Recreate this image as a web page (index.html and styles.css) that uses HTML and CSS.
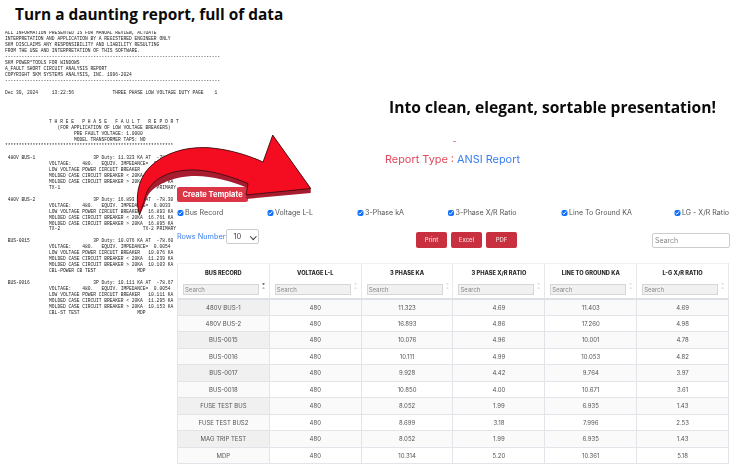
FILE: index.html
```html
<!DOCTYPE html>
<html lang="en">
<head>
<meta charset="utf-8">
<title>Report presentation</title>
<link rel="stylesheet" href="styles.css">
</head>
<body>
<main class="page">
  <h1 class="title">Turn a daunting report, full of data</h1>
  <div class="report">
  <pre class="report-head">ALL INFORMATION PRESENTED IS FOR MANUAL REVIEW, ACTUATE
INTERPRETATION AND APPLICATION BY A REGISTERED ENGINEER ONLY
SKM DISCLAIMS ANY RESPONSIBILITY AND LIABILITY RESULTING
FROM THE USE AND INTERPRETATION OF THIS SOFTWARE.
------------------------------------------------------------------------------
SKM POWER*TOOLS FOR WINDOWS
A_FAULT SHORT CIRCUIT ANALYSIS REPORT
COPYRIGHT SKM SYSTEMS ANALYSIS, INC. 1996-2024
------------------------------------------------------------------------------

Dec 30, 2024     13:22:56              THREE PHASE LOW VOLTAGE DUTY PAGE    1




                T H R E E   P H A S E   F A U L T   R E P O R T
                   (FOR APPLICATION OF LOW VOLTAGE BREAKERS)
                         PRE FAULT VOLTAGE: 1.0000
                         MODEL TRANSFORMER TAPS: NO</pre>
  <pre class="report-body">*************************************************************

 480V BUS-1                     3P Duty: 11.323 KA AT  -78.31
                VOLTAGE:    480.   EQUIV. IMPEDANCE=  0.0051
                LOW VOLTAGE POWER CIRCUIT BREAKER   11.323 KA
                MOLDED CASE CIRCUIT BREAKER &lt; 20KA  11.239 KA
                MOLDED CASE CIRCUIT BREAKER &gt; 20KA  11.323 KA
                TX-1                              TX-1 PRIMARY

 480V BUS-2                     3P Duty: 16.893 KA AT  -78.30
                VOLTAGE:    480.   EQUIV. IMPEDANCE=  0.0033
                LOW VOLTAGE POWER CIRCUIT BREAKER   16.893 KA
                MOLDED CASE CIRCUIT BREAKER &lt; 20KA  16.761 KA
                MOLDED CASE CIRCUIT BREAKER &gt; 20KA  16.895 KA
                TX-2                              TX-2 PRIMARY

 BUS-0015                       3P Duty: 10.076 KA AT  -78.60
                VOLTAGE:    480.   EQUIV. IMPEDANCE=  0.0054
                LOW VOLTAGE POWER CIRCUIT BREAKER   10.076 KA
                MOLDED CASE CIRCUIT BREAKER &lt; 20KA  11.239 KA
                MOLDED CASE CIRCUIT BREAKER &gt; 20KA  10.103 KA
                CBL-POWER CB TEST               MDP

 BUS-0016                       3P Duty: 10.111 KA AT  -78.67
                VOLTAGE:    480.   EQUIV. IMPEDANCE=  0.0054
                LOW VOLTAGE POWER CIRCUIT BREAKER   10.111 KA
                MOLDED CASE CIRCUIT BREAKER &lt; 20KA  11.295 KA
                MOLDED CASE CIRCUIT BREAKER &gt; 20KA  10.153 KA
                CBL-ST TEST                     MDP</pre>
  </div>

  <section class="panel">
    <h2 class="tagline">Into clean, elegant, sortable presentation!</h2>
    <div class="mark"></div>
    <p class="report-type">Report Type : <span class="report-name">ANSI Report</span></p>
    <button class="create" type="button">Create Template</button>
    <div class="checks">
      <label class="check"><input type="checkbox" checked>Bus Record</label>
      <label class="check"><input type="checkbox" checked>Voltage L-L</label>
      <label class="check"><input type="checkbox" checked>3-Phase kA</label>
      <label class="check"><input type="checkbox" checked>3-Phase X/R Ratio</label>
      <label class="check"><input type="checkbox" checked>Line To Ground KA</label>
      <label class="check"><input type="checkbox" checked>LG - X/R Ratio</label>
    </div>
    <div class="tools">
      <div class="rows"><span class="rows-label">Rows Number</span><span class="select-wrap"><select class="rows-select"><option>10</option></select></span></div>
      <div class="exports">
        <button class="export" type="button">Print</button>
        <button class="export" type="button">Excel</button>
        <button class="export" type="button">PDF</button>
      </div>
      <input class="global-search" type="text" placeholder="Search">
    </div>
    <table class="data">
      <thead>
        <tr>
          <th><div class="th-name">BUS RECORD</div><div class="th-search"><input type="text" placeholder="Search"><span class="sort sort-on"></span></div></th>
          <th><div class="th-name">VOLTAGE L-L</div><div class="th-search"><input type="text" placeholder="Search"><span class="sort"></span></div></th>
          <th><div class="th-name">3 PHASE KA</div><div class="th-search"><input type="text" placeholder="Search"><span class="sort"></span></div></th>
          <th><div class="th-name">3 PHASE X/R RATIO</div><div class="th-search"><input type="text" placeholder="Search"><span class="sort"></span></div></th>
          <th><div class="th-name">LINE TO GROUND KA</div><div class="th-search"><input type="text" placeholder="Search"><span class="sort"></span></div></th>
          <th><div class="th-name">L-G X/R RATIO</div><div class="th-search"><input type="text" placeholder="Search"><span class="sort"></span></div></th>
        </tr>
      </thead>
      <tbody>
        <tr><td>480V BUS-1</td><td>480</td><td>11.323</td><td>4.69</td><td>11.403</td><td>4.69</td></tr>
        <tr><td>480V BUS-2</td><td>480</td><td>16.893</td><td>4.86</td><td>17.260</td><td>4.98</td></tr>
        <tr><td>BUS-0015</td><td>480</td><td>10.076</td><td>4.96</td><td>10.001</td><td>4.78</td></tr>
        <tr><td>BUS-0016</td><td>480</td><td>10.111</td><td>4.99</td><td>10.053</td><td>4.82</td></tr>
        <tr><td>BUS-0017</td><td>480</td><td>9.928</td><td>4.42</td><td>9.764</td><td>3.97</td></tr>
        <tr><td>BUS-0018</td><td>480</td><td>10.850</td><td>4.00</td><td>10.671</td><td>3.61</td></tr>
        <tr><td>FUSE TEST BUS</td><td>480</td><td>8.052</td><td>1.99</td><td>6.935</td><td>1.43</td></tr>
        <tr><td>FUSE TEST BUS2</td><td>480</td><td>8.699</td><td>3.18</td><td>7.996</td><td>2.53</td></tr>
        <tr><td>MAG TRIP TEST</td><td>480</td><td>8.052</td><td>1.99</td><td>6.935</td><td>1.43</td></tr>
        <tr><td>MDP</td><td>480</td><td>10.314</td><td>5.20</td><td>10.361</td><td>5.18</td></tr>
      </tbody>
    </table>
  </section>

  <svg class="arrow" viewBox="0 0 733 473" aria-hidden="true">
    <path class="arrow-shade" d="M139.5 215 C134 196 139 176 152 165 C168 151 190 146 212 148 C232 150 250 156 263 162 L272.7 135 L310.7 188 L310.7 193 L246 199 L247.5 188 C232 181 212 176 196 176 C172 176 150 186 146 200 C144 206 142 210 139.5 215 Z"/>
    <path class="arrow-body" d="M139.5 215 C134 196 139 176 152 165 C168 151 190 146 212 148 C232 150 250 156 263 162 L272.7 135 L310.7 188.5 L246 195 L248 183.5 C232 177 214 171 196 170 C172 169 152 178 146 194 C144 201 142 208 139.5 215 Z"/>
  </svg>
</main>
</body>
</html>
```
FILE: styles.css
```css
* { box-sizing: border-box; }

html, body {
  margin: 0;
  padding: 0;
  background: #fff;
}

.page {
  position: relative;
  width: 733px;
  height: 473px;
  overflow: hidden;
  display: grid;
  grid-template-columns: 177px 553px;
  grid-template-rows: 30px 443px;
  font-family: Inter, "Open Sans", sans-serif;
}

.title {
  grid-column: 1 / 3;
  margin: 0;
  padding: 5px 0 0 15px;
  font: 700 15.4px/20px "Open Sans", sans-serif;
  color: #0b0b0b;
  white-space: nowrap;
}

.report {
  padding-left: 5px;
  font: 4.6px/5.95px "Liberation Mono", monospace;
  color: #222;
  filter: blur(0.35px);
  clip-path: inset(1px -200px 0 0);
}

.report-head,
.report-body {
  margin: 0;
  font: inherit;
  white-space: pre;
}

.panel {
  display: flex;
  flex-direction: column;
  align-items: flex-start;
  filter: blur(0.3px);
}

.tagline {
  margin: 67px 0 0 212px;
  font: 700 15.6px/20px "Open Sans", sans-serif;
  color: #0b0b0b;
  white-space: nowrap;
}

.mark {
  width: 3px;
  height: 1px;
  margin: 24px 0 0 276px;
  background: #e88;
}

.report-type {
  margin: 10px 0 0 208px;
  font-size: 10.9px;
  line-height: 14px;
  color: #e2475a;
}

.report-name { color: #3a7ff0; }

.create {
  width: 71px;
  height: 15px;
  margin-top: 21px;
  padding: 0;
  border: 0;
  border-radius: 2px;
  background: #dc3545;
  color: #fff;
  font: 700 7.5px/15px Inter, sans-serif;
}

.checks {
  display: grid;
  grid-template-columns: 90px 90px 90.5px 113.5px 113px 56px;
  width: 553px;
  margin-top: 6px;
  height: 10px;
}

.check {
  display: flex;
  align-items: center;
  gap: 1.5px;
  font-size: 7.1px;
  line-height: 10px;
  color: #555;
  white-space: nowrap;
}

.check input {
  flex: none;
  width: 6.5px;
  height: 6.5px;
  margin: 0;
  accent-color: #0d6efd;
}

.tools {
  display: grid;
  grid-template-columns: 239px auto 1fr;
  align-items: end;
  width: 553px;
  height: 20px;
  margin-top: 11px;
}

.rows {
  display: flex;
  align-items: center;
  gap: 1px;
  align-self: start;
}

.rows-label {
  font-size: 7.3px;
  color: #3a7ff0;
}

.select-wrap {
  position: relative;
  display: block;
  width: 33px;
  height: 15px;
}

.select-wrap::after {
  content: "";
  position: absolute;
  right: 4px;
  top: 4.5px;
  width: 3.5px;
  height: 3.5px;
  border-right: 1.2px solid #333;
  border-bottom: 1.2px solid #333;
  transform: rotate(45deg);
  pointer-events: none;
}

.rows-select {
  display: block;
  appearance: none;
  width: 33px;
  height: 15px;
  padding: 0 0 0 6px;
  border: 1px solid #ccc;
  border-radius: 2px;
  background: #fff;
  color: #444;
  font: 7.5px Inter, sans-serif;
}

.exports {
  display: flex;
  gap: 4px;
  margin-bottom: 1px;
}

.export {
  width: 31px;
  height: 16px;
  padding: 0;
  border: 0;
  border-radius: 2px;
  background: #c9303f;
  color: #f6d5d8;
  font: 500 6px/16px Inter, sans-serif;
}

.global-search {
  justify-self: end;
  width: 78px;
  height: 15px;
  margin-bottom: 1px;
  padding: 0 2px;
  border: 1px solid #ccc;
  border-radius: 2px;
  font: 7px Inter, sans-serif;
}

.global-search::placeholder,
.th-search input::placeholder { color: #888; }

.data {
  width: 552px;
  margin-top: 14px;
  table-layout: fixed;
  border-collapse: collapse;
  font-size: 6px;
  color: #555;
}

.data th {
  height: 35px;
  padding: 0;
  border: 1px solid #e6e8ec;
  border-top-color: #f2f2f2;
  border-bottom: 2px solid #dde0e4;
  vertical-align: top;
  color: #2b2b2b;
  font-size: 5.7px;
  font-weight: 800;
}

.th-name {
  height: 20px;
  line-height: 17px;
}

.th-search {
  display: flex;
  align-items: center;
  padding: 0 4px 0 5px;
  gap: 3px;
}

.th-search input {
  width: 76px;
  height: 11px;
  padding: 0 1px;
  border: 1px solid #d6d6d6;
  background: #f1f1f1;
  font: 6px Inter, sans-serif;
}

.sort {
  width: 3px;
  height: 6px;
  margin-top: -7px;
  flex: none;
  border-top: 2.5px solid #e3e3e3;
  border-bottom: 2.5px solid #e3e3e3;
  border-left: 1.5px solid transparent;
  border-right: 1.5px solid transparent;
  border-radius: 1px;
}

.sort-on {
  border-top-color: #777;
  border-bottom-color: #bbb;
}

.data td {
  height: 16.5px;
  padding: 0;
  border: 1px solid #e1e4e8;
  text-align: center;
  background: #fff;
}

.data tbody tr:nth-child(odd) td { background: #fafafa; }
.data tbody td:first-child { background: #fafafa; }
.data tbody tr:nth-child(odd) td:first-child { background: #f0f0f0; }

.arrow {
  position: absolute;
  inset: 0;
  width: 733px;
  height: 473px;
  pointer-events: none;
  filter: blur(0.3px);
}

.arrow-shade { fill: #a81c30; }

.arrow-body {
  fill: #f40c20;
  stroke: #1a0a0a;
  stroke-width: 0.7;
  stroke-linejoin: round;
}
```
